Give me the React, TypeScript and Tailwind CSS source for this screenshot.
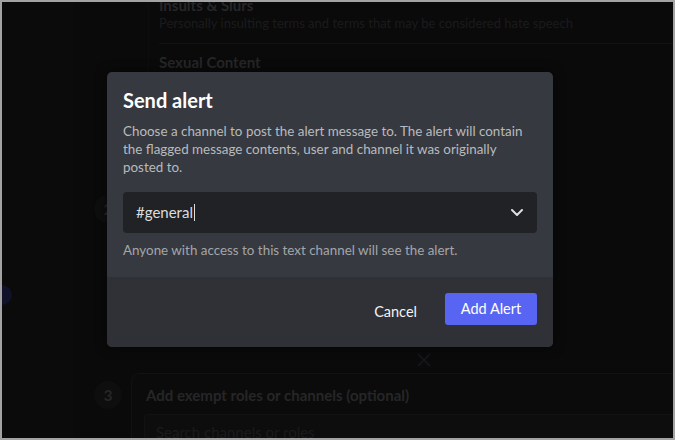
import { useState } from 'react';

const channels = ['#general', '#mod-log', '#alerts'];

const Step = ({ n }: { n: number }) => (
  <div className="w-7 h-7 rounded-full bg-[#0e0e0f] flex items-center justify-center text-[15px] font-bold text-[#262627] shrink-0">
    {n}
  </div>
);

const Chevron = () => (
  <svg width="12" height="7" viewBox="0 0 12 7" fill="none">
    <path d="M1 1l5 5 5-5" stroke="#dcddde" strokeWidth="2" strokeLinecap="round" strokeLinejoin="round" />
  </svg>
);

const App = () => {
  const [channel] = useState(channels[0]);

  return (
    <div className="relative w-[675px] h-[440px] overflow-hidden border-2 border-[#a3a3a3] bg-[#0a0a0b] font-['Lato','Noto_Sans',sans-serif]">
      {/* automod settings page, dimmed behind the dialog */}
      <div className="flex h-full">
        <div className="w-[72px] shrink-0 bg-[#0b0b0c] pt-[283px]">
          <div className="w-5 h-5 -ml-[10px] rounded-full bg-[#0f1229]" />
        </div>
        <div className="flex-1 flex flex-col">
          <div className="ml-[74px] -mt-[6px] border-l border-[#0d0d0e] pl-[10px]">
            <div className="border-b border-[#121213] pb-[11px]">
              <div className="text-[15px] leading-[18px] font-bold text-[#262627]">Insults &amp; Slurs</div>
              <div className="text-[13px] leading-[18px] text-[#1b1b1c]">
                Personally insulting terms and terms that may be considered hate speech
              </div>
            </div>
            <div className="pt-[9px]">
              <div className="text-[15px] leading-[18px] font-bold text-[#262627]">Sexual Content</div>
              <div className="text-[13px] leading-[18px] text-[#1b1b1c]">
                Terms that refer to sexual acts or anatomy
              </div>
            </div>
          </div>

          <div className="mt-[106px] ml-[20px] flex items-center">
            <Step n={2} />
          </div>

          <div className="mt-[130px] ml-[343px] w-[14px] h-[14px]">
            <svg width="14" height="14" viewBox="0 0 14 14" fill="none">
              <path d="M1 1l12 12M13 1L1 13" stroke="#18181a" strokeWidth="1.5" />
            </svg>
          </div>

          <div className="mt-[6px] ml-[20px] flex items-start gap-[9px]">
            <div className="mt-[8px]">
              <Step n={3} />
            </div>
            <div className="flex-1 rounded-tl-lg border-t border-l border-[#121213] bg-[#0b0b0c] pl-[14px] pt-[12px] h-[80px]">
              <div className="text-[15px] leading-[18px] font-bold text-[#262627]">
                Add exempt roles or channels (optional)
              </div>
              <div className="mt-[10px] -ml-[2px] rounded-tl-[4px] bg-[#0d0d0e] border-t border-l border-[#121213] pl-[11px] pt-[8px] h-[40px]">
                <div className="text-[15px] leading-[18px] text-[#1b1b1c]">Search channels or roles</div>
              </div>
            </div>
          </div>
        </div>
      </div>

      {/* Send alert dialog */}
      <div className="absolute left-[105px] top-[70px] w-[446px] rounded-[5px] overflow-hidden bg-[#36393f] shadow-[0_0_12px_rgba(0,0,0,0.5)]">
        <div className="px-4 pt-4 pb-[18px]">
          <h2 className="text-[20px] leading-[24px] font-bold text-white">Send alert</h2>
          <p className="mt-[10px] text-[13.4px] leading-[18px] text-[#b9bbbe]">
            Choose a channel to post the alert message to. The alert will contain
            <br />
            the flagged message contents, user and channel it was originally
            <br />
            posted to.
          </p>
          <div className="mt-4 h-[41px] rounded-[4px] bg-[#202225] flex items-center pl-[13px] pr-[14px]">
            <span className="text-[15px] text-[#dcddde]">{channel}</span>
            <span className="ml-px w-px h-[17px] bg-[#dcddde]" />
            <span className="ml-auto flex">
              <Chevron />
            </span>
          </div>
          <p className="mt-2 text-[13.4px] leading-[18px] text-[#a3a6aa]">
            Anyone with access to this text channel will see the alert.
          </p>
        </div>
        <div className="bg-[#2f3136] flex justify-end items-center px-4 pt-4 pb-[22px]">
          <button type="button" className="pt-[6px] mr-[28px] text-[14.5px] font-normal text-[#f2f3f5]">
            Cancel
          </button>
          <button
            type="button"
            className="w-[92px] h-[32px] rounded-[3px] bg-[#5865f2] text-[14.5px] font-normal text-white"
          >
            Add Alert
          </button>
        </div>
      </div>
    </div>
  );
};

export default App;
